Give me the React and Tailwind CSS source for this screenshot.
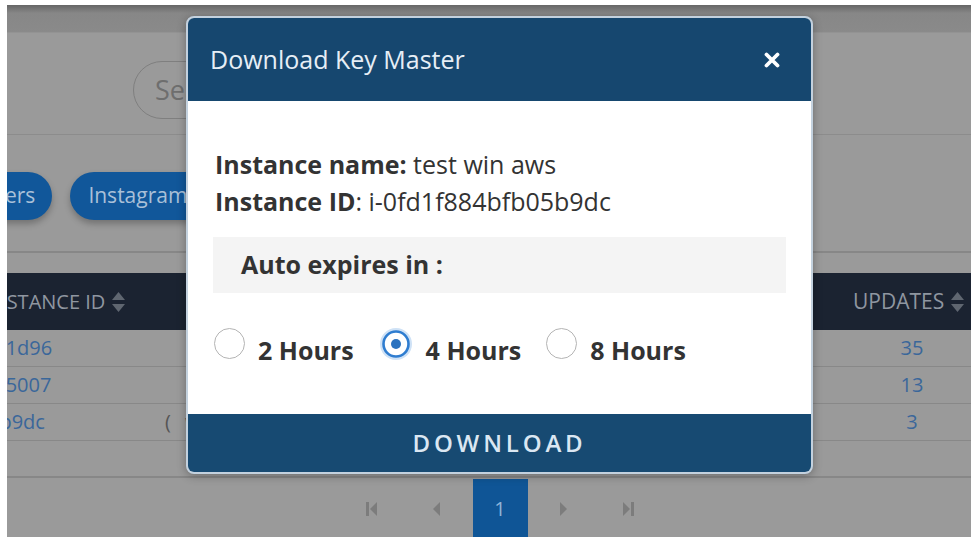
import React from "react";

const ids = [
  { id: "i-0c8e2a7f93b1d1d96", os: "", updates: 35 },
  { id: "i-04b7e93a1fc2d5007", os: "", updates: 13 },
  { id: "i-0fd1f884bfb05b9dc", os: "win", updates: 3 },
];

function SortIcon() {
  return (
    <svg width="15" height="22" viewBox="0 0 15 22" className="ml-[6px]">
      <path d="M7.5 1 L14 9 L1 9 Z" fill="#5f6670" />
      <path d="M7.5 21 L14 13 L1 13 Z" fill="#5f6670" />
    </svg>
  );
}

function Radio({ checked, label }) {
  return (
    <label className="flex items-center">
      {checked ? (
        <svg width="34" height="34" viewBox="0 0 34 34" className="-mt-[14px]">
          <circle cx="17" cy="17" r="16" fill="#cfe2f6" />
          <circle cx="17" cy="17" r="12.5" fill="#ffffff" stroke="#2f7dd0" strokeWidth="2.6" />
          <circle cx="17" cy="17" r="5" fill="#2a72bf" />
        </svg>
      ) : (
        <span className="-mt-[14px] block w-[31px] h-[31px] rounded-full border-[1.5px] border-[#b4b4b4] bg-white" />
      )}
      <span className="ml-[13px] text-[25px] font-bold text-[#333333] leading-none">{label}</span>
    </label>
  );
}

function PagerIcon({ kind }) {
  const fill = "#7c7c7c";
  if (kind === "first")
    return (
      <svg width="12" height="16" viewBox="0 0 12 16">
        <rect x="0" y="1" width="3" height="14" fill={fill} />
        <path d="M11 1 L11 15 L4 8 Z" fill={fill} />
      </svg>
    );
  if (kind === "prev")
    return (
      <svg width="8" height="16" viewBox="0 0 8 16">
        <path d="M8 1 L8 15 L1 8 Z" fill={fill} />
      </svg>
    );
  if (kind === "next")
    return (
      <svg width="8" height="16" viewBox="0 0 8 16">
        <path d="M0 1 L0 15 L7 8 Z" fill={fill} />
      </svg>
    );
  return (
    <svg width="12" height="16" viewBox="0 0 12 16">
      <path d="M1 1 L1 15 L8 8 Z" fill={fill} />
      <rect x="9" y="1" width="3" height="14" fill={fill} />
    </svg>
  );
}

export default function App() {
  return (
    <div className="w-[971px] h-[537px] bg-white pl-[7px] pt-[5px] overflow-hidden font-['Open_Sans',sans-serif]">
      <div className="relative w-full h-full overflow-hidden bg-[#9a9a9a]">
        {/* top navigation bar */}
        <div className="h-[28px] bg-gradient-to-b from-[#666666] via-[#878787] via-30% to-[#8a8a8a] border-b border-[#939393]" />

        {/* search area */}
        <div className="h-[102px] border-b border-[#8c8c8c] pl-[126px] pt-[28px]">
          <div className="h-[58px] w-[420px] rounded-full border border-[#7f7f7f] flex items-center pl-[21px] text-[27px] text-[#6e6e6e]">
            Search...
          </div>
        </div>

        {/* platform filter chips */}
        <div className="h-[118px] border-b-2 border-[#878787] flex items-center gap-[18px] ml-[-82px] pt-[6px]">
          <span className="h-[48px] px-[17px] rounded-full bg-[#11579a] text-[#a9c0d8] text-[21px] flex items-center shadow-[0_4px_6px_rgba(0,0,0,0.25)]">
            Followers
          </span>
          <span className="h-[48px] px-[18px] rounded-full bg-[#11579a] text-[#a9c0d8] text-[21px] flex items-center shadow-[0_4px_6px_rgba(0,0,0,0.25)]">
            Instagram Followers
          </span>
        </div>

        {/* instances table */}
        <div className="mt-[20px] ml-[-160px] w-[1137px]">
          <div className="h-[57px] bg-[#1b2331] flex items-center text-[20px] text-[#8f96a0]">
            <div className="w-[313px] pl-[139px] flex items-center">INSTANCE ID<SortIcon /></div>
            <div className="w-[680px] pl-[60px]">NAME</div>
            <div className="w-[144px] pl-[13px] flex items-center text-[21px]">UPDATES<SortIcon /></div>
          </div>
          {ids.map((r) => (
            <div key={r.id} className="h-[37px] border-b border-[#888888] flex items-center text-[20px]">
              <div className="w-[313px] pl-[4px] text-[#3a679a] whitespace-nowrap">{r.id}</div>
              <div className="w-[680px] pl-[5px] text-[#555555]">
                {r.os && (
                  <>
                    <span className="inline-block w-[20px]">(</span>
                    {r.os})
                  </>
                )}
              </div>
              <div className="w-[144px] text-center text-[#3a679a]">{r.updates}</div>
            </div>
          ))}
          <div className="h-[37px] border-b-2 border-[#878787]" />
        </div>

        {/* pagination */}
        <div className="mt-[1px] flex justify-center items-center gap-[9px] pl-[22px]">
          <div className="w-[55px] h-[60px] flex items-center justify-center"><PagerIcon kind="first" /></div>
          <div className="w-[55px] h-[60px] flex items-center justify-center"><PagerIcon kind="prev" /></div>
          <div className="w-[55px] h-[60px] flex items-center justify-center bg-[#0f5596] text-[#8fb4d8] text-[20px]">1</div>
          <div className="w-[55px] h-[60px] flex items-center justify-center"><PagerIcon kind="next" /></div>
          <div className="w-[55px] h-[60px] flex items-center justify-center"><PagerIcon kind="last" /></div>
        </div>

        {/* download key dialog */}
        <div className="absolute left-[179px] top-[11px] w-[627px] h-[458px] rounded-[8px] border-2 border-[#c3d1de] bg-white overflow-hidden flex flex-col shadow-[0_2px_10px_rgba(0,0,0,0.3)]">
          <div className="h-[83px] shrink-0 bg-[#16476f] flex items-center justify-between pl-[22px] pr-[31px]">
            <span className="text-[25px] text-[#e6eef6]">Download Key Master</span>
            <svg width="16" height="16" viewBox="0 0 16 16">
              <path d="M2.5 2.5 L13.5 13.5 M13.5 2.5 L2.5 13.5" stroke="#ffffff" strokeWidth="3.8" strokeLinecap="round" />
            </svg>
          </div>
          <div className="flex-1 px-[25px] pt-[45px]">
            <div className="text-[25px] leading-[37px] text-[#333333] pl-[2px]">
              <div><span className="font-bold">Instance name:</span> test win aws</div>
              <div><span className="font-bold">Instance ID</span>: i-0fd1f884bfb05b9dc</div>
            </div>
            <div className="mt-[17px] h-[56px] bg-[#f4f4f4] flex items-center pl-[28px] text-[25px] font-bold text-[#333333]">
              Auto expires in :
            </div>
            <div className="mt-[45px] flex items-center gap-[25px] pl-[1px]">
              <Radio label="2 Hours" />
              <Radio checked label="4 Hours" />
              <Radio label="8 Hours" />
            </div>
          </div>
          <div className="h-[58px] shrink-0 bg-[#174a72] flex items-center justify-center text-[24px] font-semibold tracking-[0.16em] text-[#dbe7f2]">
            DOWNLOAD
          </div>
        </div>
      </div>
    </div>
  );
}
